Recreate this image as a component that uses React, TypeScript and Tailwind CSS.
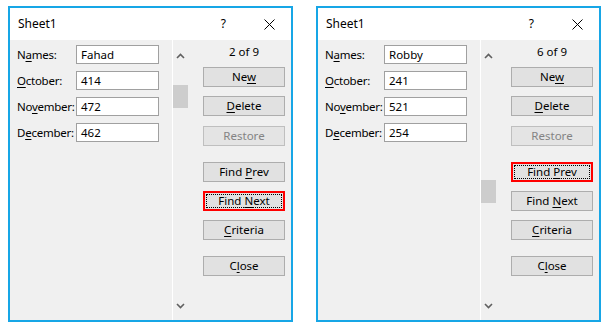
import React from "react";

type Field = { label: React.ReactNode; value: string };
type Btn = { label: React.ReactNode; mt: string; disabled?: boolean; focused?: boolean };

const u = (c: string) => <span className="underline underline-offset-2">{c}</span>;

function Button({ label, mt, disabled, focused }: Btn) {
  if (focused) {
    return (
      <div className={`${mt} h-[20px] w-[82px] border-2 border-[#ff0000] bg-[#e1e1e1] p-px`}>
        <div className="flex h-full items-center justify-center border border-dotted border-black text-[#000]">
          <span className="whitespace-pre">{label}</span>
        </div>
      </div>
    );
  }
  return (
    <div
      className={`${mt} flex h-[20px] w-[82px] items-center justify-center border ${
        disabled ? "border-[#bfbfbf] bg-[#e4e4e4] text-[#838383]" : "border-[#adadad] bg-[#e1e1e1] text-black"
      }`}
    >
      <span className="whitespace-pre">{label}</span>
    </div>
  );
}

function Chevron({ down }: { down?: boolean }) {
  return (
    <svg width="9" height="6" viewBox="0 0 9 6" className="mx-auto">
      <path
        d={down ? "M1 1 L4.5 4.5 L8 1" : "M1 5 L4.5 1.5 L8 5"}
        fill="none"
        stroke="#606060"
        strokeWidth="1.6"
      />
    </svg>
  );
}

function Dialog({
  counter,
  fields,
  thumbTop,
  focus,
}: {
  counter: string;
  fields: Field[];
  thumbTop: string;
  focus: "prev" | "next";
}) {
  const buttons: Btn[] = [
    { label: <>Ne{u("w")}</>, mt: "mt-[7px]" },
    { label: <>{u("D")}elete</>, mt: "mt-[9px]" },
    { label: "Restore", mt: "mt-[10px]", disabled: true },
    { label: <>Find {u("P")}rev</>, mt: "mt-[16px]", focused: focus === "prev" },
    { label: <>Find {u("N")}ext</>, mt: "mt-[9px]", focused: focus === "next" },
    { label: <>{u("C")}riteria</>, mt: "mt-[9px]" },
    { label: <>C{u("l")}ose</>, mt: "mt-[16px]" },
  ];
  return (
    <div className="flex h-[316px] w-[285px] flex-col border-2 border-[#17a6e6] bg-white">
      <div className="flex h-[32px] items-center bg-white pl-[8px] text-[12px] text-black">
        <span>Sheet1</span>
        <span className="ml-auto mr-[38px]">?</span>
        <svg width="11" height="11" viewBox="0 0 11 11" className="mr-[16px]">
          <path d="M0.5 0.5 L10.5 10.5 M10.5 0.5 L0.5 10.5" stroke="#000" strokeWidth="1" />
        </svg>
      </div>
      <div className="flex flex-1 bg-[#f0f0f0]">
        <div className="flex w-[162px] flex-col gap-[7px] pl-[7px] pt-[5px]">
          {fields.map((f, i) => (
            <div key={i} className="flex h-[19px] items-center">
              <div className="w-[59px] whitespace-nowrap tracking-[-0.25px]">{f.label}</div>
              <div className="flex h-[19px] w-[83px] items-center border border-[#a0a0a0] bg-white pl-[4px]">
                {f.value}
              </div>
            </div>
          ))}
        </div>
        <div className="w-px bg-white" />
        <div className="flex w-[15px] flex-col">
          <div className="mt-[13px]">
            <Chevron />
          </div>
          <div className={`${thumbTop} h-[23px] w-[15px] bg-[#cdcdcd]`} />
          <div className="mb-[11px] mt-auto">
            <Chevron down />
          </div>
        </div>
        <div className="ml-[15px] flex flex-col pt-[4px]">
          <div className="h-[16px] text-center leading-[16px]">{counter}</div>
          {buttons.map((b, i) => (
            <Button key={i} {...b} />
          ))}
        </div>
      </div>
    </div>
  );
}

export default function App() {
  const labels = [
    <>N{u("a")}mes:</>,
    <>{u("O")}ctober:</>,
    <>No{u("v")}ember:</>,
    <>D{u("e")}cember:</>,
  ];
  const left = ["Fahad", "414", "472", "462"];
  const right = ["Robby", "241", "521", "254"];
  return (
    <div
      className="flex h-[328px] w-[609px] gap-[23px] bg-white pl-[8px] pt-[6px] text-[11.5px] text-black"
      style={{ fontFamily: '"Noto Sans", "Open Sans", sans-serif' }}
    >
      <Dialog
        counter="2 of 9"
        fields={labels.map((l, i) => ({ label: l, value: left[i] }))}
        thumbTop="mt-[26px]"
        focus="next"
      />
      <Dialog
        counter="6 of 9"
        fields={labels.map((l, i) => ({ label: l, value: right[i] }))}
        thumbTop="mt-[121px]"
        focus="prev"
      />
    </div>
  );
}
